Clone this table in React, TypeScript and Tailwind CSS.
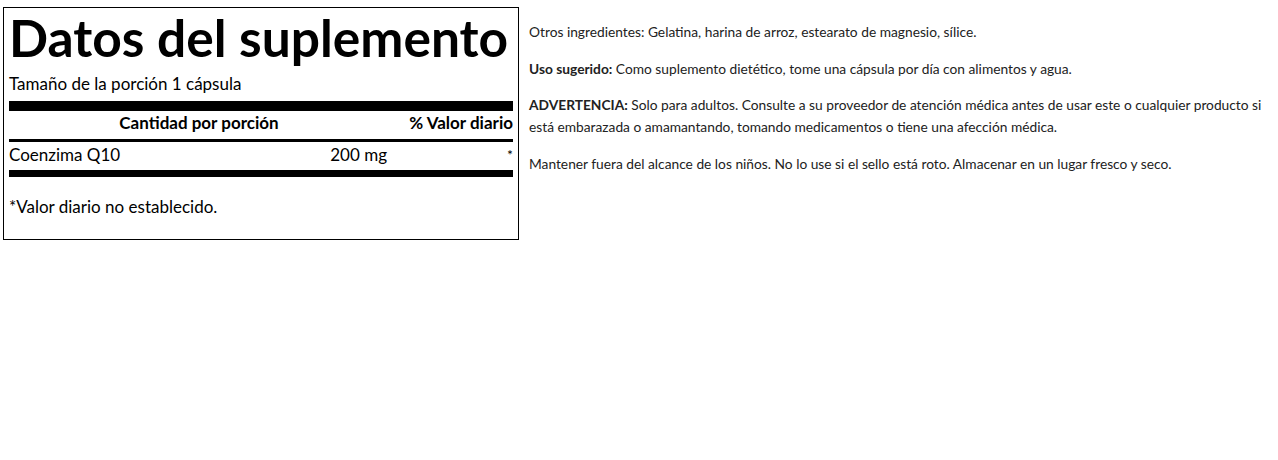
const lato = { fontFamily: 'Lato, "Open Sans", sans-serif' };

function FactsPanel() {
  return (
    <div className="w-[516px] shrink-0 border border-black px-[5px] text-black">
      <h1 className="pt-[4px] text-[51.5px] font-bold leading-none">Datos del suplemento</h1>
      <p className="mt-[10px] text-[17px] leading-[20px]">Tamaño de la porción 1 cápsula</p>
      <div className="mt-[7px] h-[10px] bg-black" />
      <div className="flex pt-[2px] pb-[6px] text-[17px] font-bold leading-[20px]">
        <span className="w-[380px] text-center">Cantidad por porción</span>
        <span className="flex-1 text-right">% Valor diario</span>
      </div>
      <div className="h-[3px] bg-black" />
      <div className="flex pt-[3px] pb-[5px] text-[17px] leading-[20px]">
        <span className="flex-1">Coenzima Q10</span>
        <span className="text-right">200 mg</span>
        <span className="w-[126px] text-right text-[14px]">*</span>
      </div>
      <div className="h-[7px] bg-black" />
      <p className="pt-[20px] pb-[22px] text-[17px] leading-[20px]">*Valor diario no establecido.</p>
    </div>
  );
}

export default function App() {
  return (
    <div className="flex items-start gap-[10px] pt-[7px] pl-[3px] bg-white min-h-[460px]" style={lato}>
      <FactsPanel />
      <div className="flex flex-1 flex-col gap-[14.5px] pt-[14px] pr-[4px] text-[13.75px] leading-[22px] text-[#222]">
        <p>Otros ingredientes: Gelatina, harina de arroz, estearato de magnesio, sílice.</p>
        <p>
          <strong>Uso sugerido:</strong> Como suplemento dietético, tome una cápsula por día con alimentos y agua.
        </p>
        <p>
          <strong>ADVERTENCIA:</strong> Solo para adultos. Consulte a su proveedor de atención médica antes de usar este o
          cualquier producto si está embarazada o amamantando, tomando medicamentos o tiene una afección médica.
        </p>
        <p>Mantener fuera del alcance de los niños. No lo use si el sello está roto. Almacenar en un lugar fresco y seco.</p>
      </div>
    </div>
  );
}
